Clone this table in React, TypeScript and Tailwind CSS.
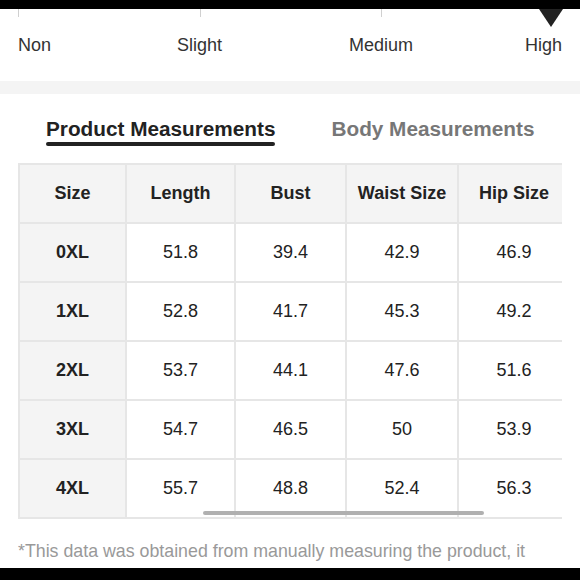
const rows = [
  ['0XL', '51.8', '39.4', '42.9', '46.9', ''],
  ['1XL', '52.8', '41.7', '45.3', '49.2', ''],
  ['2XL', '53.7', '44.1', '47.6', '51.6', ''],
  ['3XL', '54.7', '46.5', '50', '53.9', ''],
  ['4XL', '55.7', '48.8', '52.4', '56.3', ''],
];

const heads = ['Size', 'Length', 'Bust', 'Waist Size', 'Hip Size', ''];
const widths = ['w-[107px]', 'w-[109px]', 'w-[111px]', 'w-[112px]', 'w-[112px]', 'w-[100px]'];

export default function App() {
  return (
    <div className="w-[580px] h-[580px] overflow-hidden bg-white flex flex-col font-['Liberation_Sans',Arial,sans-serif] text-[#222]">
      <div className="h-[9px] bg-black shrink-0" />

      {/* stretch scale */}
      <div className="h-[72px] shrink-0">
        <div className="flex items-start h-[18px]">
          <div className="ml-[18px] w-px h-[8px] bg-[#d0d0d0]" />
          <div className="ml-[181px] w-px h-[8px] bg-[#d0d0d0]" />
          <div className="ml-[180px] w-px h-[8px] bg-[#d0d0d0]" />
          <div className="ml-auto mr-[17px] w-0 h-0 border-l-[12px] border-r-[12px] border-t-[18px] border-l-transparent border-r-transparent border-t-[#222]" />
        </div>
        <div className="mt-[8px] pl-[18px] grid grid-cols-[159px_172px_176px_auto] text-[18px] leading-[20px] text-[#333]">
          <span>Non</span>
          <span>Slight</span>
          <span>Medium</span>
          <span>High</span>
        </div>
      </div>

      <div className="h-[13px] bg-[#f4f4f4] shrink-0" />

      {/* tabs */}
      <div className="flex gap-[56px] pl-[46px] pt-[23px] shrink-0">
        <div className="flex flex-col">
          <span className="text-[20.75px] leading-[24px] font-bold text-[#222]">Product Measurements</span>
          <div className="mt-[1px] h-[4px] rounded-full bg-[#222]" />
        </div>
        <span className="text-[20.75px] leading-[24px] font-bold text-[#777]">Body Measurements</span>
      </div>

      {/* table */}
      <div className="relative mx-[18px] mt-[17px] w-[544px] overflow-hidden shrink-0">
        <table className="border-collapse table-fixed w-[651px]">
          <thead>
            <tr className="h-[59px] bg-[#f4f4f4]">
              {heads.map((h, i) => (
                <th key={i} className={`${widths[i]} border-2 border-[#e6e6e6] text-[18px] font-bold text-center`}>
                  {h}
                </th>
              ))}
            </tr>
          </thead>
          <tbody>
            {rows.map((r) => (
              <tr key={r[0]} className="h-[59px]">
                {r.map((c, i) => (
                  <td
                    key={i}
                    className={
                      i === 0
                        ? 'border-2 border-[#e6e6e6] bg-[#f4f4f4] text-[18px] font-bold text-center'
                        : 'border-2 border-[#e6e6e6] text-[18px] text-center'
                    }
                  >
                    {c}
                  </td>
                ))}
              </tr>
            ))}
          </tbody>
        </table>
        <div className="absolute left-[185px] bottom-[4px] w-[281px] h-[4px] rounded-full bg-[#b0b0b0]" />
      </div>

      <p className="mt-[22px] pl-[18px] text-[17.8px] leading-[20px] text-[#999] whitespace-nowrap">
        *This data was obtained from manually measuring the product, it
      </p>

      <div className="mt-auto h-[12px] bg-black shrink-0" />
    </div>
  );
}
